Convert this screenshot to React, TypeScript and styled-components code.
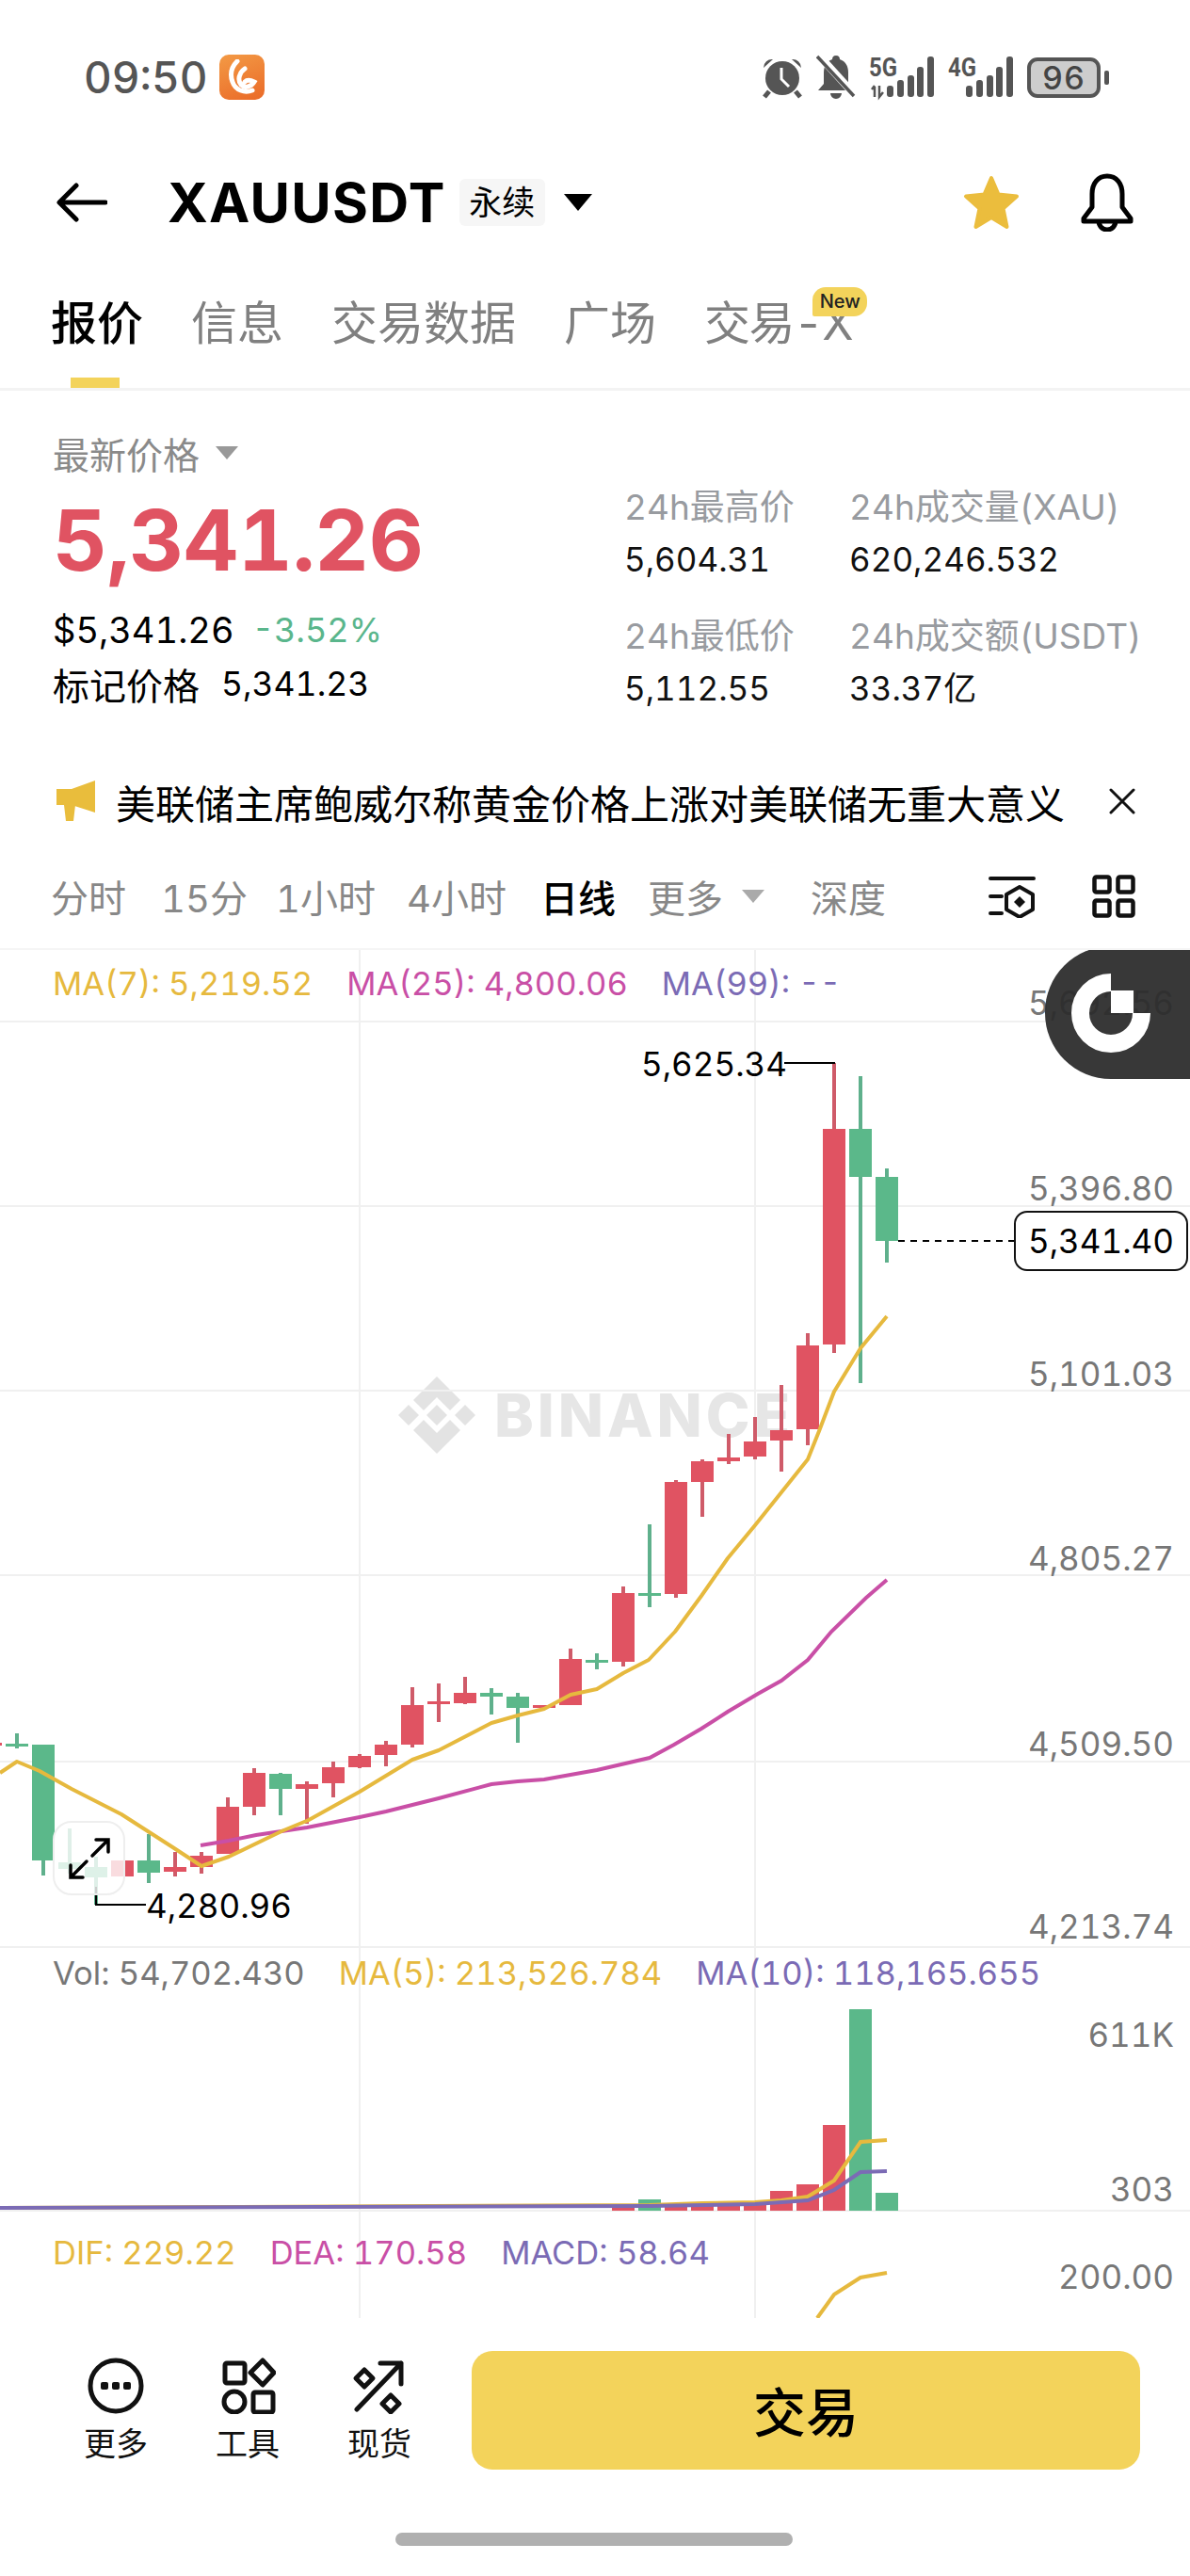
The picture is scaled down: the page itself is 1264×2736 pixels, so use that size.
import * as React from 'react';
import styled, { createGlobalStyle } from 'styled-components';

const RED = '#e05362';
const GREEN = '#5bb88a';
const YELLOW = '#e6b93e';
const PINK = '#c94fa6';
const PURPLE = '#7b6bb5';
const SANS = 'Inter, "Noto Sans CJK SC", sans-serif';

const GlobalStyle = createGlobalStyle`
    html, body {
        margin: 0;
        padding: 0;
        background: #fff;
    }
    * {
        box-sizing: border-box;
    }
`;

const Page = styled.div`
    width: 1264px;
    height: 2736px;
    overflow: hidden;
    background: #fff;
    color: #000;
    font-family: ${SANS};
    font-variant-numeric: tabular-nums;
`;

/* status bar */
const StatusBar = styled.div`
    height: 164px;
    display: flex;
    align-items: center;
    justify-content: space-between;
    padding: 0 86px 0 89px;
`;

const StatusLeft = styled.div`
    display: flex;
    align-items: center;
    gap: 12px;
`;

const Clock = styled.span`
    font-size: 46px;
    font-weight: 500;
    color: #555;
`;

const AppIcon = styled.div`
    width: 48px;
    height: 48px;
    border-radius: 10px;
    background: linear-gradient(160deg, #f39a45, #ea6a28);
    display: flex;
    align-items: center;
    justify-content: center;
`;

const StatusRight = styled.div`
    display: flex;
    align-items: center;
    gap: 14px;
`;

const Battery = styled.div`
    width: 78px;
    height: 43px;
    border: 4px solid #555;
    border-radius: 11px;
    background: #cdcdcd;
    color: #444;
    font-size: 34px;
    font-weight: 500;
    line-height: 35px;
    text-align: center;
    letter-spacing: 1px;
`;

const BatteryNub = styled.div`
    width: 5px;
    height: 15px;
    margin-left: -10px;
    border-radius: 2px;
    background: #555;
`;

/* title row */
const NavBar = styled.div`
    height: 102px;
    display: flex;
    align-items: center;
    padding: 0 60px 0 60px;
`;

const Title = styled.h1`
    margin: 0 0 0 64px;
    font-size: 58px;
    font-weight: 700;
    letter-spacing: 1.3px;
`;

const Tag = styled.span`
    margin-left: 14px;
    width: 91px;
    height: 50px;
    border-radius: 6px;
    background: #f6f6f6;
    font-size: 35px;
    line-height: 50px;
    text-align: center;
`;

const Caret = styled.span<{ $size: number; $color: string; $gap: number }>`
    margin-left: ${p => p.$gap}px;
    width: 0;
    height: 0;
    border-left: ${p => p.$size}px solid transparent;
    border-right: ${p => p.$size}px solid transparent;
    border-top: ${p => p.$size * 1.2}px solid ${p => p.$color};
`;

const NavSpacer = styled.div`
    flex: 1;
`;

const NavIcons = styled.div`
    display: flex;
    align-items: center;
    gap: 65px;
`;

/* tabs */
const TabRow = styled.div`
    height: 149px;
    display: flex;
    gap: 51px;
    padding: 49px 0 0 54px;
    border-bottom: 3px solid #f3f3f3;
`;

const Tab = styled.div<{ $active?: boolean; $tight?: boolean }>`
    position: relative;
    height: 97px;
    font-size: 49px;
    line-height: 58px;
    font-weight: ${p => (p.$active ? 500 : 400)};
    color: ${p => (p.$active ? '#000' : '#808080')};
    letter-spacing: ${p => (p.$tight ? '-1.5px' : 'normal')};
    ${p =>
        p.$active &&
        `&::after {
            content: '';
            position: absolute;
            left: 21px;
            bottom: 0;
            width: 52px;
            height: 11px;
            background: #f3d35b;
        }`}
`;

const NewBadge = styled.span`
    position: absolute;
    top: -10px;
    right: -16px;
    width: 58px;
    height: 31px;
    border-radius: 14px 14px 14px 2px;
    background: #f3d35b;
    color: #222;
    font-size: 20px;
    font-weight: 500;
    line-height: 31px;
    letter-spacing: normal;
    text-align: center;
`;

/* price block */
const PriceSection = styled.section`
    height: 396px;
    display: flex;
    padding: 44px 0 0 56px;
`;

const PriceLeft = styled.div`
    width: 607px;
`;

const Muted = styled.div`
    display: flex;
    align-items: center;
    height: 44px;
    font-size: 39px;
    color: #8a8a8a;
`;

const LastPrice = styled.div`
    height: 100px;
    margin: 21px 0 23px;
    font-size: 90px;
    font-weight: 700;
    line-height: 100px;
    color: ${RED};
    letter-spacing: -0.5px;
`;

const PriceLine = styled.div<{ $gap: number }>`
    display: flex;
    align-items: center;
    gap: ${p => p.$gap}px;
    height: 44px;
    margin-bottom: 13px;
    font-size: 38px;
`;

const Change = styled.span`
    font-size: 36px;
    color: #5ab68c;
`;

const MarkLabel = styled.span`
    font-size: 39px;
`;

const MarkValue = styled.span`
    font-size: 35.5px;
`;

const StatGrid = styled.div`
    display: grid;
    grid-template-columns: 239px auto;
    row-gap: 38px;
    margin-top: 58px;
    align-self: flex-start;
`;

const Stat = styled.div`
    display: flex;
    flex-direction: column;
    gap: 11px;
`;

const StatLabel = styled.span`
    height: 44px;
    font-size: 37px;
    line-height: 44px;
    color: #989ba0;
    white-space: nowrap;
`;

const StatValue = styled.span`
    height: 44px;
    font-size: 35px;
    line-height: 44px;
    color: #111;
    white-space: nowrap;
`;

/* news line */
const Notice = styled.div`
    height: 80px;
    display: flex;
    align-items: center;
    padding: 0 58px 0 60px;
`;

const NoticeText = styled.span`
    margin-left: 21px;
    font-size: 42px;
    flex: 1;
    white-space: nowrap;
`;

/* intervals */
const IntervalRow = styled.div`
    height: 118px;
    display: flex;
    align-items: center;
    padding: 6px 0 0 54px;
    border-bottom: 2px solid #f5f5f5;
    font-size: 40px;
    color: #888;
`;

const Interval = styled.span<{ $active?: boolean; $width: number; $offset?: number }>`
    width: ${p => p.$width}px;
    margin-left: ${p => p.$offset || 0}px;
    flex: none;
    white-space: nowrap;
    color: ${p => (p.$active ? '#000' : '#888')};
    font-weight: ${p => (p.$active ? 500 : 400)};
`;

const IntervalIcons = styled.div`
    margin-left: auto;
    margin-right: 58px;
    display: flex;
    align-items: center;
    gap: 60px;
`;

/* chart */
const Chart = styled.section`
    position: relative;
    height: 1453px;
    overflow: hidden;
`;

const ChartSvg = styled.svg`
    position: absolute;
    inset: 0;
`;

const Watermark = styled.div`
    position: absolute;
    left: 423px;
    top: 453px;
    display: flex;
    align-items: center;
    gap: 20px;
    color: #e6e6e6;
    font-family: Inter, sans-serif;
    font-size: 63px;
    font-weight: 800;
    letter-spacing: 4px;
`;

const Pane = styled.div<{ $height: number; $pad: number }>`
    position: relative;
    height: ${p => p.$height}px;
    padding: ${p => p.$pad}px 0 0 56px;
`;

const Legend = styled.div`
    display: flex;
    gap: 36px;
    height: 42px;
    font-size: 34.6px;
    line-height: 42px;
`;

const LegendItem = styled.span<{ $color: string }>`
    color: ${p => p.$color};
    white-space: nowrap;
`;

const AxisLabel = styled.span<{ $top: number }>`
    position: absolute;
    right: 17px;
    top: ${p => p.$top}px;
    transform: translateY(-50%);
    font-size: 35px;
    color: #777;
`;

const PriceNote = styled.span<{ $left: number; $top: number }>`
    position: absolute;
    left: ${p => p.$left}px;
    top: ${p => p.$top}px;
    transform: translateY(-50%);
    font-size: 35px;
    color: #000;
`;

const CurrentPrice = styled.div`
    position: absolute;
    left: 1077px;
    top: 277px;
    width: 185px;
    height: 64px;
    border: 2px solid #111;
    border-radius: 14px;
    background: #fff;
    font-size: 35px;
    line-height: 60px;
    text-align: center;
`;

const FloatWidget = styled.div`
    position: absolute;
    right: 0;
    top: -4px;
    width: 154px;
    height: 141px;
    border-radius: 70px 0 0 70px;
    background: rgba(44, 44, 44, 0.94);
`;

const ExpandButton = styled.div`
    position: absolute;
    left: 56px;
    top: 925px;
    width: 77px;
    height: 79px;
    border: 2px solid #eee;
    border-radius: 20px;
    background: rgba(255, 255, 255, 0.8);
    display: flex;
    align-items: center;
    justify-content: center;
`;

/* bottom */
const BottomBar = styled.div`
    height: 274px;
    display: flex;
    flex-direction: column;
    padding-top: 35px;
`;

const ActionRow = styled.div`
    height: 126px;
    display: flex;
    align-items: stretch;
    padding: 0 53px;
`;

const ToolItem = styled.div`
    width: 140px;
    display: flex;
    flex-direction: column;
    align-items: center;
    gap: 10px;
    padding-top: 7px;
    font-size: 34px;
    line-height: 44px;
    color: #111;
`;

const TradeButton = styled.div`
    width: 710px;
    margin-left: 28px;
    padding-bottom: 4px;
    border-radius: 22px;
    background: #f3d35b;
    font-size: 56px;
    font-weight: 500;
    display: flex;
    align-items: center;
    justify-content: center;
`;

const HomeBar = styled.div`
    width: 422px;
    height: 14px;
    margin: 67px 0 0 420px;
    border-radius: 7px;
    background: #b0b0b0;
`;

type Candle = [number, number, number, number, number, 'r' | 'g'];

// x, wick top, wick bottom, body top, body bottom, colour
const candles: Candle[] = [
    [-10, 1851, 1854, 1851, 1854, 'r'],
    [18, 1841, 1857, 1852, 1855, 'g'],
    [46, 1853, 1992, 1853, 1976, 'g'],
    [74, 1942, 1990, 1978, 1985, 'g'],
    [102, 1972, 2023, 1983, 1994, 'g'],
    [130, 1976, 1993, 1976, 1993, 'r'],
    [158, 1948, 2000, 1976, 1989, 'g'],
    [186, 1967, 1993, 1983, 1988, 'r'],
    [214, 1967, 1990, 1971, 1983, 'r'],
    [242, 1909, 1969, 1919, 1969, 'r'],
    [270, 1878, 1928, 1883, 1919, 'r'],
    [298, 1883, 1928, 1884, 1900, 'g'],
    [326, 1892, 1937, 1895, 1900, 'r'],
    [354, 1871, 1909, 1877, 1894, 'r'],
    [382, 1863, 1878, 1865, 1877, 'r'],
    [410, 1849, 1876, 1853, 1864, 'r'],
    [438, 1792, 1856, 1811, 1853, 'r'],
    [466, 1788, 1829, 1807, 1810, 'r'],
    [494, 1781, 1810, 1798, 1809, 'r'],
    [522, 1793, 1821, 1798, 1802, 'g'],
    [550, 1798, 1851, 1802, 1814, 'g'],
    [578, 1811, 1814, 1811, 1814, 'r'],
    [606, 1751, 1811, 1762, 1811, 'r'],
    [634, 1756, 1773, 1763, 1766, 'g'],
    [662, 1685, 1770, 1692, 1765, 'r'],
    [690, 1619, 1707, 1692, 1695, 'g'],
    [718, 1572, 1697, 1574, 1693, 'r'],
    [746, 1550, 1611, 1552, 1574, 'r'],
    [774, 1523, 1555, 1548, 1552, 'r'],
    [802, 1505, 1550, 1531, 1547, 'r'],
    [830, 1471, 1563, 1519, 1530, 'r'],
    [858, 1416, 1535, 1429, 1518, 'r'],
    [886, 1129, 1437, 1199, 1428, 'r'],
    [914, 1143, 1469, 1199, 1250, 'g'],
    [942, 1241, 1341, 1250, 1318, 'g'],
];

const volumes: [number, number, 'r' | 'g'][] = [
    [662, 2342, 'r'],
    [690, 2336, 'g'],
    [718, 2341, 'r'],
    [746, 2341, 'r'],
    [774, 2341, 'r'],
    [802, 2340, 'r'],
    [830, 2327, 'r'],
    [858, 2320, 'r'],
    [886, 2257, 'r'],
    [914, 2134, 'g'],
    [942, 2329, 'g'],
];

const ma7 =
    '0,1883 18,1871 42,1881 76,1900 129,1927 185,1963 214,1982 243,1972 299,1945 328,1933 382,1903 438,1869 466,1859 522,1830 550,1822 578,1815 606,1800 634,1794 662,1777 689,1763 717,1733 745,1695 773,1655 802,1620 830,1585 858,1550 870,1520 886,1478 914,1432 942,1398';
const ma25 =
    '213,1960 243,1955 272,1949 326,1941 382,1930 410,1924 466,1910 522,1895 550,1892 578,1890 634,1880 690,1867 716,1853 745,1836 773,1818 805,1799 830,1785 858,1763 883,1733 920,1697 942,1678';
const volMa5 = '0,2345 690,2342 746,2340 802,2339 830,2337 858,2333 886,2316 914,2275 942,2273';
const volMa10 = '0,2345 690,2343 802,2341 858,2337 886,2326 914,2307 942,2306';
const macdDif = '868,2462 886,2437 914,2419 942,2414';

const AlarmIcon = () => (
    <svg width="44" height="46" viewBox="0 0 44 46">
        <circle cx="22" cy="24" r="18" fill="#555" />
        <path d="M2 13 A9 9 0 0 1 12 4 Z M42 13 A9 9 0 0 0 32 4 Z" fill="#555" />
        <path d="M8 38 L3 44 M36 38 L41 44" stroke="#555" strokeWidth="5" />
        <path d="M21 13 V25 L29 33" fill="none" stroke="#fff" strokeWidth="3" />
    </svg>
);

const MuteIcon = () => (
    <svg width="42" height="48" viewBox="0 0 42 48">
        <path
            d="M21 1 C24 1 25 3 25 5 C31 7 34 12 34 19 V31 L40 38 H2 L8 31 V19 C8 12 11 7 17 5 C17 3 18 1 21 1 Z M15 41 H27 A6 6 0 0 1 15 41 Z"
            fill="#555"
        />
        <path d="M3 1 L42 44" stroke="#fff" strokeWidth="8" />
        <path d="M1 2 L40 44" stroke="#555" strokeWidth="3.5" />
    </svg>
);

const Signal: React.FC<{ label: string; arrows?: boolean }> = ({ label, arrows }) => (
    <svg width="70" height="58" viewBox="0 -6 70 58">
        <text x="0" y="22" fontFamily="Roboto, sans-serif" fontWeight="700" fontSize="27" fill="#555" textLength="30" lengthAdjust="spacingAndGlyphs">
            {label}
        </text>
        {arrows && <path d="M6 33 V44 M3 36 L6 32 M11 32 V44 L15 39" stroke="#555" strokeWidth="2.5" fill="none" />}
        {[
            [19, 32],
            [30, 26],
            [41, 21],
            [51, 12],
            [62, 1],
        ].map(([x, top]) => (
            <rect key={x} x={x} y={top} width="7" height={44 - top} rx="3" fill="#555" />
        ))}
    </svg>
);

const BackArrow = () => (
    <svg width="54" height="42" viewBox="0 0 54 42">
        <path d="M52 21 H4 M21 3 L3 21 L21 39" fill="none" stroke="#000" strokeWidth="5" strokeLinecap="round" strokeLinejoin="round" />
    </svg>
);

const StarIcon = () => (
    <svg width="60" height="58" viewBox="0 0 60 58">
        <path
            d="M30 3 L37.5 20.5 L57 22.5 L42.5 35.5 L46.5 55 L30 45 L13.5 55 L17.5 35.5 L3 22.5 L22.5 20.5 Z"
            fill="#ebbd3d"
            stroke="#ebbd3d"
            strokeWidth="4"
            strokeLinejoin="round"
        />
    </svg>
);

const BellIcon = () => (
    <svg width="56" height="62" viewBox="0 0 56 62">
        <path
            d="M28 3 C38 3 44 11 44 22 V36 L53 48 V51 H3 V48 L12 36 V22 C12 11 18 3 28 3 Z M19 51 A9 9 0 0 0 37 51"
            fill="none"
            stroke="#000"
            strokeWidth="5"
            strokeLinejoin="round"
        />
    </svg>
);

const MegaphoneIcon = () => (
    <svg width="42" height="44" viewBox="0 0 42 44">
        <path d="M0 9 H16 L41 0 V34 L16 26 H0 Z M8 26 H20 L18 43 H10 Z" fill="#e9bd3c" />
    </svg>
);

const CloseIcon = () => (
    <svg width="28" height="28" viewBox="0 0 28 28">
        <path d="M2 2 L26 26 M26 2 L2 26" stroke="#111" strokeWidth="3" strokeLinecap="round" />
    </svg>
);

const SettingsIcon = () => (
    <svg width="50" height="46" viewBox="0 0 50 46">
        <g fill="none" stroke="#111" strokeWidth="4" strokeLinecap="round" strokeLinejoin="round">
            <path d="M2 4 H48 M2 23 H14 M2 41 H14" />
            <path d="M33 13 L47 21 V37 L33 45 L19 37 V21 Z" />
        </g>
        <path d="M33 23 L39 29 L33 35 L27 29 Z" fill="#111" />
    </svg>
);

const GridIcon = () => (
    <svg width="46" height="46" viewBox="0 0 46 46">
        <g fill="none" stroke="#111" strokeWidth="4.5" strokeLinejoin="round">
            <rect x="2.5" y="2.5" width="16" height="16" rx="2" />
            <rect x="27.5" y="2.5" width="16" height="16" rx="2" />
            <rect x="2.5" y="27.5" width="16" height="16" rx="2" />
            <rect x="27.5" y="27.5" width="16" height="16" rx="2" />
        </g>
    </svg>
);

const MoreIcon = () => (
    <svg width="60" height="60" viewBox="0 0 60 60">
        <circle cx="30" cy="30" r="27" fill="none" stroke="#111" strokeWidth="5" />
        <rect x="14" y="26" width="8" height="8" rx="2" fill="#111" />
        <rect x="26" y="26" width="8" height="8" rx="2" fill="#111" />
        <rect x="38" y="26" width="8" height="8" rx="2" fill="#111" />
    </svg>
);

const ToolsIcon = () => (
    <svg width="60" height="60" viewBox="0 0 60 60">
        <g fill="none" stroke="#111" strokeWidth="5" strokeLinejoin="round">
            <rect x="6" y="6" width="21" height="21" rx="2" />
            <path d="M46 3 L58 16 L46 29 L33 16 Z" />
            <circle cx="16" cy="47" r="11" />
            <rect x="36" y="37" width="21" height="21" rx="2" />
        </g>
    </svg>
);

const SpotIcon = () => (
    <svg width="60" height="60" viewBox="0 0 60 60">
        <g fill="none" stroke="#111" strokeWidth="5" strokeLinecap="round" strokeLinejoin="round">
            <path d="M6 55 L53 6 M31 6 H53 V28" />
            <path d="M14 13 L23 22 L14 31 L5 22 Z" />
            <path d="M42 40 L51 49 L42 58 L33 49 Z" />
        </g>
    </svg>
);

const BinanceLogo = () => (
    <svg width="82" height="82" viewBox="-41 -41 82 82">
        <path
            d="M0 -11 L11 0 L0 11 L-11 0 Z M-41 0 L-30 -11 L-19 0 L-30 11 Z M41 0 L30 -11 L19 0 L30 11 Z M0 -41 L25 -16 L14 -5 L0 -19 L-14 -5 L-25 -16 Z M0 41 L25 16 L14 5 L0 19 L-14 5 L-25 16 Z"
            fill="#e3e3e3"
        />
    </svg>
);

const Price = () => (
    <PriceSection>
        <PriceLeft>
            <Muted>
                最新价格
                <Caret $size={12} $color="#999" $gap={17} />
            </Muted>
            <LastPrice>5,341.26</LastPrice>
            <PriceLine $gap={19}>
                <span>$5,341.26</span>
                <Change>-3.52%</Change>
            </PriceLine>
            <PriceLine $gap={23}>
                <MarkLabel>标记价格</MarkLabel>
                <MarkValue>5,341.23</MarkValue>
            </PriceLine>
        </PriceLeft>
        <StatGrid>
            <Stat>
                <StatLabel>24h最高价</StatLabel>
                <StatValue>5,604.31</StatValue>
            </Stat>
            <Stat>
                <StatLabel>24h成交量(XAU)</StatLabel>
                <StatValue>620,246.532</StatValue>
            </Stat>
            <Stat>
                <StatLabel>24h最低价</StatLabel>
                <StatValue>5,112.55</StatValue>
            </Stat>
            <Stat>
                <StatLabel>24h成交额(USDT)</StatLabel>
                <StatValue>33.37亿</StatValue>
            </Stat>
        </StatGrid>
    </PriceSection>
);

const ChartArea = () => (
    <Chart>
        <Watermark>
            <BinanceLogo />
            BINANCE
        </Watermark>
        <ChartSvg width="1264" height="1453" viewBox="0 1009 1264 1453">
            {[1085, 1281, 1477, 1673, 1871, 2068, 2348].map(y => (
                <line key={y} x1="0" x2="1264" y1={y} y2={y} stroke="#f0f0f0" strokeWidth="2" />
            ))}
            {[382, 802].map(x => (
                <line key={x} x1={x} x2={x} y1="1009" y2="2462" stroke="#f0f0f0" strokeWidth="2" />
            ))}
            {candles.map(([x, wickTop, wickBottom, top, bottom, kind]) => (
                <g key={x}>
                    <rect x={x - 2} y={wickTop} width="4" height={wickBottom - wickTop} fill={kind === 'r' ? '#cf5b69' : '#5fb08c'} />
                    <rect x={x - 12} y={top} width="24" height={bottom - top} fill={kind === 'r' ? RED : GREEN} />
                </g>
            ))}
            <polyline points={ma25} fill="none" stroke={PINK} strokeWidth="4" />
            <polyline points={ma7} fill="none" stroke={YELLOW} strokeWidth="4" strokeLinejoin="round" />
            <path d="M833 1129 H887" stroke="#000" strokeWidth="2" fill="none" />
            <path d="M102 2004 V2023 H155" stroke="#000" strokeWidth="2" fill="none" />
            <line x1="954" x2="1077" y1="1318" y2="1318" stroke="#000" strokeWidth="2" strokeDasharray="7 6" />
            {volumes.map(([x, top, kind]) => (
                <rect key={x} x={x - 12} y={top} width="24" height={2348 - top} fill={kind === 'r' ? RED : GREEN} />
            ))}
            <polyline points={volMa5} fill="none" stroke={YELLOW} strokeWidth="4" />
            <polyline points={volMa10} fill="none" stroke={PURPLE} strokeWidth="4" />
            <polyline points={macdDif} fill="none" stroke={YELLOW} strokeWidth="4" />
        </ChartSvg>

        <Pane $height={1059} $pad={14}>
            <Legend>
                <LegendItem $color={YELLOW}>MA(7): 5,219.52</LegendItem>
                <LegendItem $color={PINK}>MA(25): 4,800.06</LegendItem>
                <LegendItem $color={PURPLE}>MA(99): --</LegendItem>
            </Legend>
        </Pane>
        <Pane $height={280} $pad={6}>
            <Legend>
                <LegendItem $color="#777">Vol: 54,702.430</LegendItem>
                <LegendItem $color={YELLOW}>MA(5): 213,526.784</LegendItem>
                <LegendItem $color={PURPLE}>MA(10): 118,165.655</LegendItem>
            </Legend>
        </Pane>
        <Pane $height={114} $pad={23}>
            <Legend>
                <LegendItem $color={YELLOW}>DIF: 229.22</LegendItem>
                <LegendItem $color={PINK}>DEA: 170.58</LegendItem>
                <LegendItem $color={PURPLE}>MACD: 58.64</LegendItem>
            </Legend>
        </Pane>

        <AxisLabel $top={56}>5,692.56</AxisLabel>
        <AxisLabel $top={253}>5,396.80</AxisLabel>
        <AxisLabel $top={450}>5,101.03</AxisLabel>
        <AxisLabel $top={646}>4,805.27</AxisLabel>
        <AxisLabel $top={843}>4,509.50</AxisLabel>
        <AxisLabel $top={1037}>4,213.74</AxisLabel>
        <AxisLabel $top={1152}>611K</AxisLabel>
        <AxisLabel $top={1316}>303</AxisLabel>
        <AxisLabel $top={1409}>200.00</AxisLabel>

        <PriceNote $left={681} $top={121}>5,625.34</PriceNote>
        <PriceNote $left={155} $top={1015}>4,280.96</PriceNote>
        <CurrentPrice>5,341.40</CurrentPrice>

        <ExpandButton>
            <svg width="50" height="50" viewBox="0 0 50 50">
                <path
                    d="M28 22 L44 6 M32 5 H45 V18 M22 28 L6 44 M5 32 V45 H18"
                    fill="none"
                    stroke="#000"
                    strokeWidth="3.5"
                    strokeLinecap="round"
                />
            </svg>
        </ExpandButton>

        <FloatWidget>
            <svg width="154" height="141" viewBox="0 0 154 141">
                <path d="M70 38.5 A32.5 32.5 0 1 0 102.5 71" fill="none" stroke="#fff" strokeWidth="19" />
                <rect x="70" y="47" width="24" height="24" fill="#fff" />
            </svg>
        </FloatWidget>
    </Chart>
);

export default function App() {
    return (
        <Page>
            <GlobalStyle />
            <StatusBar>
                <StatusLeft>
                    <Clock>09:50</Clock>
                    <AppIcon>
                        <svg width="34" height="38" viewBox="0 0 34 38">
                            <path
                                d="M12 2 C6 8 4 16 7 24 C10 33 20 36 28 33 M20 10 C14 14 12 22 16 27 C20 31 27 29 30 24 C26 22 22 22 20 24"
                                fill="none"
                                stroke="#fff"
                                strokeWidth="5"
                                strokeLinecap="round"
                            />
                        </svg>
                    </AppIcon>
                </StatusLeft>
                <StatusRight>
                    <AlarmIcon />
                    <MuteIcon />
                    <Signal label="5G" arrows />
                    <Signal label="4G" />
                    <Battery>96</Battery>
                    <BatteryNub />
                </StatusRight>
            </StatusBar>

            <NavBar>
                <BackArrow />
                <Title>XAUUSDT</Title>
                <Tag>永续</Tag>
                <Caret $size={15} $color="#000" $gap={20} />
                <NavSpacer />
                <NavIcons>
                    <StarIcon />
                    <BellIcon />
                </NavIcons>
            </NavBar>

            <TabRow>
                <Tab $active>报价</Tab>
                <Tab>信息</Tab>
                <Tab>交易数据</Tab>
                <Tab>广场</Tab>
                <Tab $tight>
                    交易-X
                    <NewBadge>New</NewBadge>
                </Tab>
            </TabRow>

            <Price />

            <Notice>
                <MegaphoneIcon />
                <NoticeText>美联储主席鲍威尔称黄金价格上涨对美联储无重大意义</NoticeText>
                <CloseIcon />
            </Notice>

            <IntervalRow>
                <Interval $width={117}>分时</Interval>
                <Interval $width={122}>15分</Interval>
                <Interval $width={139}>1小时</Interval>
                <Interval $width={142}>4小时</Interval>
                <Interval $width={114} $active>
                    日线
                </Interval>
                <Interval $width={100}>更多</Interval>
                <Caret $size={12} $color="#aaa" $gap={0} />
                <Interval $width={100} $offset={49}>
                    深度
                </Interval>
                <IntervalIcons>
                    <SettingsIcon />
                    <GridIcon />
                </IntervalIcons>
            </IntervalRow>

            <ChartArea />

            <BottomBar>
                <ActionRow>
                    <ToolItem>
                        <MoreIcon />
                        更多
                    </ToolItem>
                    <ToolItem>
                        <ToolsIcon />
                        工具
                    </ToolItem>
                    <ToolItem>
                        <SpotIcon />
                        现货
                    </ToolItem>
                    <TradeButton>交易</TradeButton>
                </ActionRow>
                <HomeBar />
            </BottomBar>
        </Page>
    );
}
